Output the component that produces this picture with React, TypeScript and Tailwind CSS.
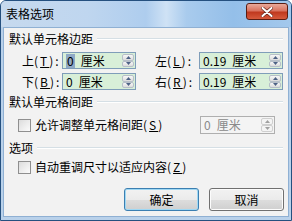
import React from "react";

function Spinner({ disabled = false }: { disabled?: boolean }) {
  const arrow = disabled ? "#a0a0a0" : "#4d6185";
  const half =
    "flex-1 flex items-center justify-center border rounded-[2px] " +
    (disabled
      ? "border-[#cfcfcf] bg-[#f4f4f4]"
      : "border-[#b7bfc9] bg-gradient-to-b from-[#f7f7f7] to-[#dcdcdc]");
  return (
    <div className="flex flex-col w-[13px] h-full py-[1px] pr-[1px] gap-0">
      <div className={half}>
        <svg width="5" height="3" viewBox="0 0 5 3">
          <path d="M0 3 L2.5 0 L5 3 Z" fill={arrow} />
        </svg>
      </div>
      <div className={half}>
        <svg width="5" height="3" viewBox="0 0 5 3">
          <path d="M0 0 L2.5 3 L5 0 Z" fill={arrow} />
        </svg>
      </div>
    </div>
  );
}

function NumInput({
  num,
  width,
  selected = false,
}: {
  num: string;
  width: string;
  selected?: boolean;
}) {
  return (
    <div
      className={
        "flex items-stretch h-[17px] border border-[#7f9db9] bg-[#d8efd8] " +
        width
      }
    >
      <div className="flex-1 flex items-center pl-[3px] text-[12px] leading-[14px] text-black whitespace-nowrap">
        <span className={selected ? "bg-[#8fa9c6] px-[1px]" : ""}>{num}</span>
        <span className="ml-[6px]">厘米</span>
      </div>
      <Spinner />
    </div>
  );
}

function GroupHeader({ text }: { text: string }) {
  return (
    <div className="flex items-center h-[14px] pl-[5px] pr-[5px]">
      <span className="text-[12px] leading-[14px] text-black whitespace-nowrap">
        {text}
      </span>
      <div className="flex-1 ml-[4px] flex flex-col">
        <div className="h-px bg-[#d5dfe5]" />
        <div className="h-px bg-white" />
      </div>
    </div>
  );
}

function Checkbox() {
  return (
    <div className="w-[13px] h-[13px] border border-[#8f8f8f] bg-gradient-to-br from-[#dcdcdc] to-[#fbfbfb] p-[2px]">
      <div className="w-full h-full bg-gradient-to-br from-[#e2e2e2] to-[#f6f6f6]" />
    </div>
  );
}

function Mn({ k }: { k: string }) {
  return (
    <span className="tracking-[2px]">
      (<u>{k}</u>)
    </span>
  );
}

export default function App() {
  return (
    <div
      className="w-[292px] h-[221px] flex flex-col rounded-t-[6px] border border-[#25507f] bg-[#b9d1ea] overflow-hidden"
      style={{
        fontFamily: "'Noto Sans CJK SC', 'Liberation Sans', sans-serif",
      }}
    >
      {/* title bar */}
      <div className="h-[26px] flex items-center relative bg-[linear-gradient(90deg,#c6d9ee_0%,#bfd6ef_30%,#aecdee_50%,#cfe2f5_57%,#a9cbed_64%,#94bfe9_80%,#a3c8ec_100%)]">
        <span className="ml-[5px] text-[12px] leading-[14px] text-black">
          表格选项
        </span>
        <div className="absolute right-[3px] top-[2px] w-[42px] h-[17px] rounded-[3px] border border-[#5a1d12] bg-[linear-gradient(180deg,#e9a99a_0%,#d9735f_45%,#c0391f_55%,#d65a3c_100%)] flex items-center justify-center">
          <svg width="12" height="10" viewBox="0 0 12 10">
            <path
              d="M1.5 1 L10.5 9 M10.5 1 L1.5 9"
              stroke="#6b2a1f"
              strokeWidth="3.4"
              strokeLinecap="round"
            />
            <path
              d="M1.5 1 L10.5 9 M10.5 1 L1.5 9"
              stroke="#ffffff"
              strokeWidth="2"
              strokeLinecap="round"
            />
          </svg>
        </div>
      </div>

      {/* client */}
      <div className="flex-1 mx-[2px] mb-[3px] bg-[#f2f2f2] border border-[#8fb0d3] flex flex-col text-black">
        <div className="mt-[4px]">
          <GroupHeader text="默认单元格边距" />
        </div>

        {/* row 1 */}
        <div className="flex items-center mt-[6px] pl-[18px]">
          <span className="w-[40px] text-[12px] leading-[14px] whitespace-nowrap">
            上<Mn k="T" />:
          </span>
          <NumInput num="0" width="w-[74px]" selected />
          <span className="ml-[19px] w-[44px] text-[12px] leading-[14px] whitespace-nowrap">
            左<Mn k="L" />:
          </span>
          <NumInput num="0.19" width="w-[84px]" />
        </div>

        {/* row 2 */}
        <div className="flex items-center mt-[4px] pl-[18px]">
          <span className="w-[40px] text-[12px] leading-[14px] whitespace-nowrap">
            下<Mn k="B" />:
          </span>
          <NumInput num="0" width="w-[74px]" />
          <span className="ml-[19px] w-[44px] text-[12px] leading-[14px] whitespace-nowrap">
            右<Mn k="R" />:
          </span>
          <NumInput num="0.19" width="w-[84px]" />
        </div>

        <div className="mt-[5px]">
          <GroupHeader text="默认单元格间距" />
        </div>

        {/* row 3 */}
        <div className="flex items-center mt-[7px] pl-[14px]">
          <Checkbox />
          <span className="ml-[4px] text-[12px] leading-[14px] whitespace-nowrap">
            允许调整单元格间距<Mn k="S" />
          </span>
          <div className="ml-auto mr-[13px] flex items-stretch w-[75px] h-[18px] border border-[#afafaf] bg-[#f4f4f4]">
            <div className="flex-1 flex items-center pl-[3px] text-[12px] leading-[14px] text-[#8a8a8a] whitespace-nowrap">
              <span>0</span>
              <span className="ml-[6px]">厘米</span>
            </div>
            <Spinner disabled />
          </div>
        </div>

        <div className="mt-[7px]">
          <GroupHeader text="选项" />
        </div>

        {/* row 4 */}
        <div className="flex items-center mt-[5px] pl-[14px]">
          <Checkbox />
          <span className="ml-[4px] text-[12px] leading-[14px] whitespace-nowrap">
            自动重调尺寸以适应内容<Mn k="Z" />
          </span>
        </div>

        {/* buttons */}
        <div className="flex justify-end gap-[10px] mt-auto mb-[5px] mr-[4px]">
          <button className="w-[75px] h-[23px] rounded-[3px] border border-[#3c7fb1] shadow-[inset_0_0_0_1px_#9fd8f4] bg-[linear-gradient(180deg,#f2f2f2_0%,#ebebeb_50%,#dddddd_51%,#cfcfcf_100%)] text-[12px] leading-[14px] text-black">
            确定
          </button>
          <button className="w-[75px] h-[23px] rounded-[3px] border border-[#707070] shadow-[inset_0_0_0_1px_#fcfcfc] bg-[linear-gradient(180deg,#f2f2f2_0%,#ebebeb_50%,#dddddd_51%,#cfcfcf_100%)] text-[12px] leading-[14px] text-black">
            取消
          </button>
        </div>
      </div>
    </div>
  );
}
